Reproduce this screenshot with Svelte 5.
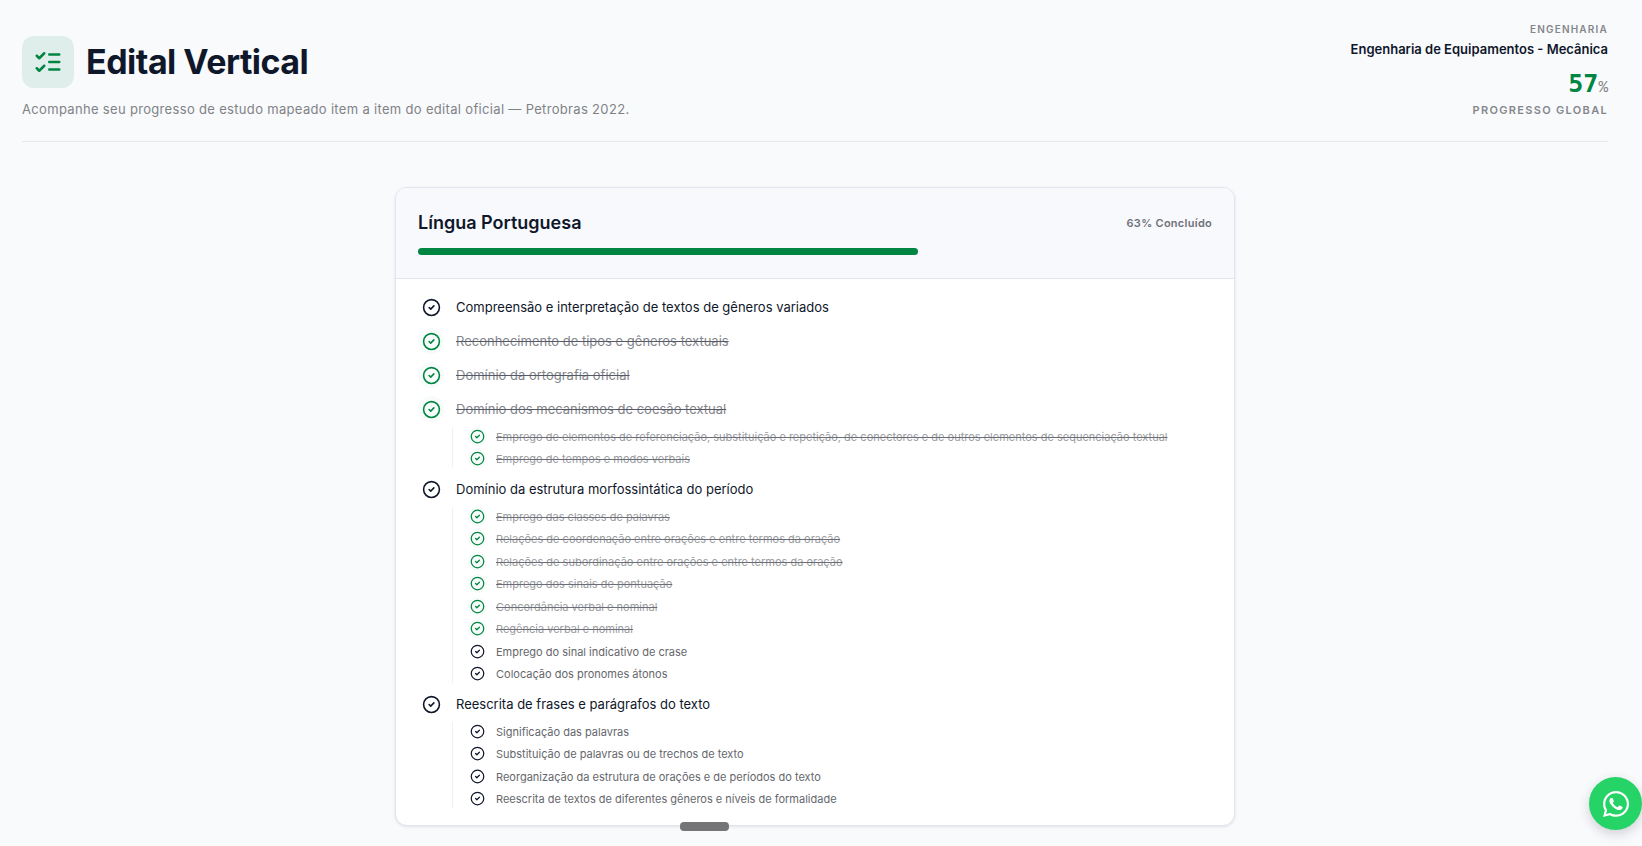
<script>
  let topics = $state([
    { text: 'Compreensão e interpretação de textos de gêneros variados', done: false, children: [] },
    { text: 'Reconhecimento de tipos e gêneros textuais', done: true, children: [] },
    { text: 'Domínio da ortografia oficial', done: true, children: [] },
    {
      text: 'Domínio dos mecanismos de coesão textual',
      done: true,
      children: [
        { text: 'Emprego de elementos de referenciação, substituição e repetição, de conectores e de outros elementos de sequenciação textual', done: true },
        { text: 'Emprego de tempos e modos verbais', done: true }
      ]
    },
    {
      text: 'Domínio da estrutura morfossintática do período',
      done: false,
      children: [
        { text: 'Emprego das classes de palavras', done: true },
        { text: 'Relações de coordenação entre orações e entre termos da oração', done: true },
        { text: 'Relações de subordinação entre orações e entre termos da oração', done: true },
        { text: 'Emprego dos sinais de pontuação', done: true },
        { text: 'Concordância verbal e nominal', done: true },
        { text: 'Regência verbal e nominal', done: true },
        { text: 'Emprego do sinal indicativo de crase', done: false },
        { text: 'Colocação dos pronomes átonos', done: false }
      ]
    },
    {
      text: 'Reescrita de frases e parágrafos do texto',
      done: false,
      children: [
        { text: 'Significação das palavras', done: false },
        { text: 'Substituição de palavras ou de trechos de texto', done: false },
        { text: 'Reorganização da estrutura de orações e de períodos do texto', done: false },
        { text: 'Reescrita de textos de diferentes gêneros e níveis de formalidade', done: false }
      ]
    }
  ]);
  const progress = 63;
</script>

{#snippet check(item)}
  <label class:done={item.done}>
    <span class="mark">
      <input type="checkbox" bind:checked={item.done} />
      <svg viewBox="0 0 24 24" aria-hidden="true">
        <circle cx="12" cy="12" r="10" />
        <path d="m9 12 2 2 4-4" />
      </svg>
    </span>
    <span class="text">{item.text}</span>
  </label>
{/snippet}

<div class="page">
  <header class="top">
    <div class="intro">
      <div class="brand">
        <span class="badge">
          <svg viewBox="0 0 24 24" aria-hidden="true">
            <path d="m3 17 2 2 4-4M3 7l2 2 4-4M13 6h8M13 12h8M13 18h8" />
          </svg>
        </span>
        <h1>Edital Vertical</h1>
      </div>
      <p>Acompanhe seu progresso de estudo mapeado item a item do edital oficial — Petrobras 2022.</p>
    </div>
    <div class="summary">
      <span class="area">Engenharia</span>
      <strong>Engenharia de Equipamentos - Mecânica</strong>
      <span class="total"><b>57</b><small>%</small></span>
      <span class="caption">Progresso Global</span>
    </div>
  </header>

  <main>
    <section class="card">
      <div class="head">
        <div class="row">
          <h2>Língua Portuguesa</h2>
          <span>{progress}% Concluído</span>
        </div>
        <div class="track"><div class="bar" style="width: {progress}%"></div></div>
      </div>
      <ul class="topics">
        {#each topics as topic}
          <li>
            {@render check(topic)}
            {#if topic.children.length}
              <ul class="subtopics">
                {#each topic.children as child}
                  <li>{@render check(child)}</li>
                {/each}
              </ul>
            {/if}
          </li>
        {/each}
      </ul>
    </section>
  </main>
</div>

<div class="handle"></div>

<a class="whatsapp" href="#whatsapp" aria-label="WhatsApp">
  <svg viewBox="0 0 448 512" aria-hidden="true">
    <path d="M380.9 97.1C339 55.1 283.2 32 223.9 32c-122.4 0-222 99.6-222 222 0 39.1 10.2 77.3 29.6 111L0 480l117.7-30.9c32.4 17.7 68.9 27 106.1 27h.1c122.3 0 224.1-99.6 224.1-222 0-59.3-25.2-115-67.1-157zm-157 341.6c-33.2 0-65.7-8.9-94-25.7l-6.7-4-69.8 18.3L72 359.2l-4.4-7c-18.5-29.4-28.2-63.3-28.2-98.2 0-101.7 82.8-184.5 184.6-184.5 49.3 0 95.6 19.2 130.4 54.1 34.8 34.9 56.2 81.2 56.1 130.5 0 101.8-84.9 184.6-186.6 184.6zm101.2-138.2c-5.5-2.8-32.8-16.2-37.9-18-5.1-1.9-8.8-2.8-12.5 2.8-3.7 5.6-14.3 18-17.6 21.8-3.2 3.7-6.5 4.2-12 1.4-32.6-16.3-54-29.1-75.5-66-5.7-9.8 5.7-9.1 16.3-30.3 1.8-3.7.9-6.9-.5-9.7-1.4-2.8-12.5-30.1-17.1-41.2-4.5-10.8-9.1-9.3-12.5-9.5-3.2-.2-6.9-.2-10.6-.2-3.7 0-9.7 1.4-14.8 6.9-5.1 5.6-19.4 19-19.4 46.3 0 27.3 19.9 53.7 22.6 57.4 2.8 3.7 39.1 59.7 94.8 83.8 35.2 15.2 49 16.5 66.6 13.9 10.7-1.6 32.8-13.4 37.4-26.4 4.6-13 4.6-24.1 3.2-26.4-1.3-2.5-5-3.9-10.5-6.6z" />
  </svg>
</a>

<style>
  :global(body) {
    margin: 0;
    background: #f9fafc;
    color: #0f172a;
    font-family: Inter, "Liberation Sans", sans-serif;
  }

  .page {
    padding: 22px 34px 20px 22px;
  }

  h1, h2, p, ul {
    margin: 0;
    padding: 0;
  }

  ul {
    list-style: none;
  }

  svg {
    display: block;
    fill: none;
    stroke: currentColor;
    stroke-width: 2;
    stroke-linecap: round;
    stroke-linejoin: round;
  }

  .top {
    display: flex;
    justify-content: space-between;
    align-items: flex-end;
    padding-bottom: 24px;
    border-bottom: 1px solid #e5e7eb;
  }

  .brand {
    display: flex;
    align-items: center;
    gap: 12px;
  }

  .badge {
    display: grid;
    place-items: center;
    width: 52px;
    height: 52px;
    border-radius: 12px;
    background: #dfeeea;
    color: #008542;
  }

  .badge svg {
    width: 30px;
    height: 30px;
  }

  h1 {
    font-size: 34px;
    line-height: 40px;
    font-weight: 700;
    letter-spacing: -0.015em;
  }

  .intro p {
    margin-top: 13px;
    font-size: 13px;
    line-height: 16px;
    letter-spacing: 0.025em;
    color: #808286;
  }

  .summary {
    display: flex;
    flex-direction: column;
    align-items: flex-end;
  }

  .area,
  .caption {
    font-size: 11px;
    line-height: 14px;
    font-weight: 600;
    text-transform: uppercase;
    letter-spacing: 0.12em;
    color: #85878c;
  }

  .area {
    font-size: 10px;
  }

  .summary strong {
    margin-top: 4px;
    font-size: 13px;
    line-height: 18px;
    font-weight: 600;
  }

  .total {
    display: flex;
    align-items: baseline;
    margin: 12px 0 1px;
    font-family: "DejaVu Sans Mono", monospace;
    line-height: 28px;
  }

  .total b {
    font-size: 25px;
    color: #008542;
  }

  .total small {
    font-family: "Liberation Mono", monospace;
    font-size: 16px;
    color: #808286;
  }

  .card {
    max-width: 838px;
    margin: 45px auto 0;
    border: 1px solid #e2e5ee;
    border-radius: 12px;
    background: #fff;
    box-shadow: 0 1px 3px rgba(15, 23, 42, 0.1);
    overflow: hidden;
  }

  .head {
    padding: 22px 22px 23px;
    background: #f8f9fd;
    border-bottom: 1px solid #e2e5ee;
  }

  .row {
    display: flex;
    align-items: center;
    justify-content: space-between;
  }

  h2 {
    font-size: 18px;
    line-height: 26px;
    font-weight: 600;
  }

  .row span {
    font-size: 11px;
    font-weight: 600;
    letter-spacing: 0.025em;
    color: #707277;
  }

  .track {
    margin-top: 12px;
  }

  .bar {
    height: 7px;
    border-radius: 4px;
    background: #008542;
  }

  .topics {
    display: flex;
    flex-direction: column;
    gap: 8px;
    padding: 15px 22px 17px;
  }

  label {
    display: flex;
    align-items: center;
    gap: 12px;
    cursor: pointer;
  }

  .mark {
    position: relative;
    display: grid;
    place-items: center;
    flex: none;
    width: 26px;
    height: 26px;
    border-radius: 50%;
  }

  .mark input {
    position: absolute;
    inset: 0;
    margin: 0;
    opacity: 0;
    cursor: pointer;
  }

  .mark svg {
    width: 19px;
    height: 19px;
  }

  .text {
    font-size: 13px;
    line-height: 18px;
  }

  .done .mark {
    background: #f7fbf9;
    color: #008542;
  }

  .done .text {
    color: #84868b;
    text-decoration: line-through;
    text-decoration-color: #565a66;
  }

  .subtopics {
    display: flex;
    flex-direction: column;
    gap: 3px;
    margin: 5px 0 0 34px;
    padding-left: 15px;
    border-left: 1px solid #f0f1f3;
  }

  .subtopics li:nth-child(even):not(:last-child) {
    margin-bottom: 1px;
  }

  .subtopics label {
    gap: 9px;
  }

  .subtopics .mark {
    width: 19px;
    height: 19px;
  }

  .subtopics .mark svg {
    width: 15px;
    height: 15px;
  }

  .subtopics .text {
    font-size: 11px;
    color: #65676c;
  }

  .subtopics .done .text {
    color: #9b9da1;
    text-decoration-color: #6b6e78;
  }

  .handle {
    position: fixed;
    left: 680px;
    bottom: 15px;
    width: 49px;
    height: 9px;
    border-radius: 4px;
    background: #757577;
  }

  .whatsapp {
    position: fixed;
    right: 0;
    bottom: 16px;
    display: grid;
    place-items: center;
    width: 53px;
    height: 53px;
    border-radius: 50%;
    background: #25d366;
    color: #fff;
    box-shadow: 0 4px 12px rgba(15, 23, 42, 0.18);
  }

  .whatsapp svg {
    width: 26px;
    height: 30px;
    fill: currentColor;
    stroke: none;
  }
</style>
